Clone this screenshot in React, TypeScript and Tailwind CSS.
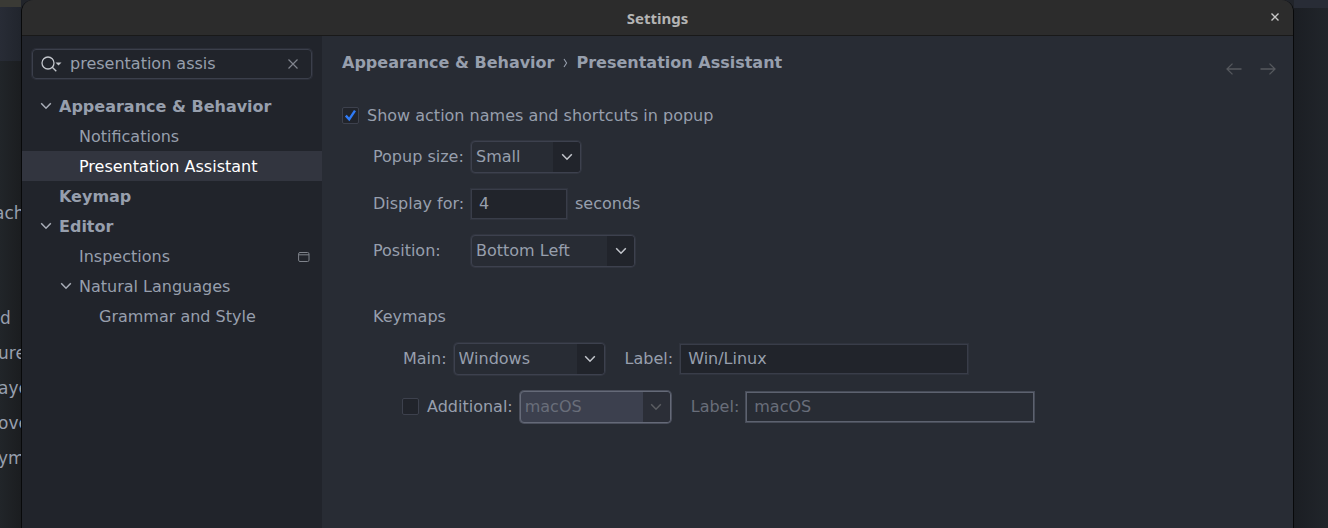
import type { ReactNode } from 'react';

const rowText = 'flex h-[30px] items-center pt-[2px]';

function Chevron({ className = '' }: { className?: string }) {
  return (
    <svg viewBox="0 0 12 8" className={`h-2 w-3 ${className}`} fill="none" stroke="currentColor" strokeWidth="1.5" aria-hidden="true">
      <path d="M1.200 1.200 6 6.200l4.800-5" />
    </svg>
  );
}

function Dropdown({ id, value, width, disabled = false }: { id: string; value: string; width: string; disabled?: boolean }) {
  return (
    <div
      className={`m-px grid h-8 overflow-hidden rounded-[4px] border ring-1 ${width} ${
        disabled ? 'border-[#656a78] bg-[#3c404e] text-[#696e7a] ring-[#4b4f5c]' : 'border-[#3d414e] bg-[#282c34] ring-[#31353f]'
      }`}
    >
      <select
        id={id}
        disabled={disabled}
        defaultValue={value}
        className="col-start-1 row-start-1 w-full appearance-none bg-transparent pr-8 pl-1 opacity-100 outline-none"
      >
        <option>{value}</option>
      </select>
      <span
        className={`pointer-events-none col-start-1 row-start-1 flex w-[27px] items-center justify-center justify-self-end ${
          disabled ? 'bg-[#2b2e37] text-[#5b5d62]' : 'bg-[#21242b] text-[#c3c6cc]'
        }`}
      >
        <Chevron />
      </span>
    </div>
  );
}

function TextBox({ id, value, width, disabled = false }: { id: string; value: string; width: string; disabled?: boolean }) {
  return (
    <input
      id={id}
      type="text"
      defaultValue={value}
      disabled={disabled}
      className={`m-px h-[30px] border px-[7px] pb-[2px] ring-1 outline-none ${width} ${
        disabled ? 'border-[#5d626f] bg-[#282c34] text-[#696e7a] ring-[#474c58]' : 'border-[#393d49] bg-[#21242b] ring-[#2f333d]'
      }`}
    />
  );
}

function CheckBox({ id, checked = false }: { id: string; checked?: boolean }) {
  return (
    <span className="mb-px grid size-[17px]">
      <input
        id={id}
        type="checkbox"
        defaultChecked={checked}
        className="peer col-start-1 row-start-1 size-[17px] appearance-none rounded-[2px] border border-[#3d414d] bg-[#21242b]"
      />
      <svg
        viewBox="0 0 17 17"
        className="pointer-events-none invisible col-start-1 row-start-1 size-[17px] peer-checked:visible"
        fill="none"
        stroke="#2f7bf6"
        strokeWidth="2.4"
        aria-hidden="true"
      >
        <path d="M3.8 8.6 7.2 12.3 13 3.6" />
      </svg>
    </span>
  );
}

function Group({ label, indent = 'pl-[18px]', children }: { label: string; indent?: string; children?: ReactNode }) {
  return (
    <li>
      <div className={`${rowText} gap-[7px] ${indent}`}>
        <Chevron className="mb-[2px] text-[#a9aeb8]" />
        <span>{label}</span>
      </div>
      <ul className="font-normal">{children}</ul>
    </li>
  );
}

function Sidebar() {
  return (
    <aside className="w-[300px] shrink-0 bg-[#21242b] pt-[13px]">
      <div className="mx-[10px] flex h-[30px] items-center rounded-[4px] border border-[#3b3f4b] pr-3 pl-2 ring-1 ring-[#2b2e38]">
        <svg viewBox="0 0 21 16" className="h-4 w-[21px] shrink-0" fill="none" stroke="#c3c6cc" strokeWidth="1.3" aria-hidden="true">
          <circle cx="7" cy="7" r="6" />
          <path d="m11.3 11.3 4 4" />
          <path d="M14.5 6.5h6l-3 3z" fill="#c3c6cc" stroke="none" />
        </svg>
        <input
          type="text"
          aria-label="Search settings"
          defaultValue="presentation assis"
          className="ml-2 min-w-0 flex-1 bg-transparent outline-none"
        />
        <button type="button" aria-label="Clear search" className="mr-px">
          <svg viewBox="0 0 10 10" className="size-[10px]" fill="none" stroke="#80848d" strokeWidth="1.2" aria-hidden="true">
            <path d="m.5.5 9 9m0-9-9 9" />
          </svg>
        </button>
      </div>
      <ul className="mt-3 font-bold">
        <Group label="Appearance & Behavior">
          <li className={`${rowText} pl-[57px]`}>Notifications</li>
          <li className={`${rowText} bg-[#32353f] pl-[57px] text-white`}>Presentation Assistant</li>
        </Group>
        <li className={`${rowText} pl-[37px]`}>Keymap</li>
        <Group label="Editor">
          <li className={`${rowText} justify-between pr-3 pl-[57px]`}>
            Inspections
            <svg viewBox="0 0 12 10" className="h-[10px] w-3" fill="none" stroke="#7f838b" aria-hidden="true">
              <rect x=".6" y=".5" width="10.4" height="9" rx="1.4" />
              <path d="M1 2.800h10" strokeWidth="1" />
            </svg>
          </li>
          <Group label="Natural Languages" indent="pl-[38px]">
            <li className={`${rowText} pl-[77px]`}>Grammar and Style</li>
          </Group>
        </Group>
      </ul>
    </aside>
  );
}

function NavArrow({ label, d }: { label: string; d: string }) {
  return (
    <button type="button" aria-label={label}>
      <svg viewBox="0 0 16 12" className="h-3 w-4" fill="none" stroke="#55585d" strokeWidth="1.3" aria-hidden="true">
        <path d={d} />
      </svg>
    </button>
  );
}

function Preferences() {
  return (
    <main className="min-w-0 flex-1 bg-[#282c34] pt-[17px] pl-5">
      <header className="flex justify-between pr-[17px]">
        <h2 className="flex h-5 items-center font-bold">
          Appearance &amp; Behavior
          <svg viewBox="0 0 5 10" className="mr-2 ml-[9px] h-[10px] w-[5px]" fill="none" stroke="#979fad" strokeWidth="1.1" aria-hidden="true">
            <path d="M1 1 3.600 5 1 9" />
          </svg>
          Presentation Assistant
        </h2>
        <nav className="flex gap-[18px] pt-[10px]">
          <NavArrow label="Back" d="M15.5 6H1M6.5.6 1 6l5.5 5.4" />
          <NavArrow label="Forward" d="M.5 6H15M9.5.6 15 6l-5.5 5.4" />
        </nav>
      </header>

      <div className="mt-[31px] flex h-5 items-center gap-2">
        <CheckBox id="show-actions" checked />
        <label htmlFor="show-actions">Show action names and shortcuts in popup</label>
      </div>

      <div className="mt-[14px] grid grid-cols-[97px_auto] items-center justify-start gap-y-[14px] pl-[31px]">
        <label htmlFor="popup-size">Popup size:</label>
        <Dropdown id="popup-size" value="Small" width="w-[110px]" />
        <label htmlFor="duration">Display for:</label>
        <div className="flex items-center gap-[7px]">
          <TextBox id="duration" value="4" width="w-[96px]" />
          <span>seconds</span>
        </div>
        <label htmlFor="position">Position:</label>
        <Dropdown id="position" value="Bottom Left" width="w-[164px]" />
      </div>

      <section className="mt-[39px] pl-[31px]">
        <h3 className="h-5 leading-5">Keymaps</h3>
        <div className="mt-[15px] flex items-center pl-[30px]">
          <label htmlFor="main-keymap" className="mr-[6px]">Main:</label>
          <Dropdown id="main-keymap" value="Windows" width="w-[151px]" />
          <label htmlFor="main-label" className="mr-[6px] ml-[19px]">Label:</label>
          <TextBox id="main-label" value="Win/Linux" width="w-[288px]" />
        </div>
        <div className="mt-[14px] flex items-center pl-[29px]">
          <CheckBox id="additional" />
          <label htmlFor="additional" className="mr-[6px] ml-2">Additional:</label>
          <Dropdown id="additional-keymap" value="macOS" width="w-[151px]" disabled />
          <label htmlFor="additional-label" className="mr-[6px] ml-[19px] text-[#696e7a]">Label:</label>
          <TextBox id="additional-label" value="macOS" width="w-[288px]" disabled />
        </div>
      </section>
    </main>
  );
}

export default function App() {
  return (
    <div className="flex h-screen overflow-hidden bg-[#21242a] font-['DejaVu_Sans',sans-serif] text-[16px] leading-5 text-[#979fad]">
      <div className="w-[21px] shrink-0 overflow-hidden bg-linear-to-r from-[#212529] to-[#1b1d20] text-[17px]">
        <div className="h-[7px] bg-[#3a3a35]" />
        <div className="h-[54px] bg-linear-to-r from-[#282c36] to-[#21252d]" />
        <ul className="mt-[134px] -ml-[2px]">
          <li className="mb-[70px] -ml-1 flex h-[35px] items-center">ach</li>
          <li className="ml-[2px] flex h-[35px] items-center">d</li>
          {['ure', 'aye', 'ove', 'ym'].map((text) => (
            <li key={text} className="flex h-[35px] items-center">{text}</li>
          ))}
        </ul>
      </div>

      <div className="flex min-w-0 flex-1 flex-col overflow-hidden rounded-t-[12px] border-x border-[#08090a]">
        <div className="grid h-9 shrink-0 grid-cols-[1fr_auto_1fr] items-center border-b border-[#191919] bg-[#2c2c2c]">
          <h1 className="col-start-2 font-['Noto_Sans',sans-serif] text-[15px] font-bold text-[#b4b4b4]">Settings</h1>
          <button type="button" aria-label="Close" className="mr-[14px] justify-self-end pb-[2px]">
            <svg viewBox="0 0 8 8" className="size-2" fill="none" stroke="#c8c8c8" strokeWidth="1.4" aria-hidden="true">
              <path d="m.5.5 7 7m0-7-7 7" />
            </svg>
          </button>
        </div>
        <div className="flex min-h-0 flex-1">
          <Sidebar />
          <Preferences />
        </div>
      </div>

      <div className="w-[34px] shrink-0 bg-linear-to-r from-[#1b1e23] to-[#21252b]">
        <div className="h-2 bg-[#282c36]" />
      </div>
    </div>
  );
}
